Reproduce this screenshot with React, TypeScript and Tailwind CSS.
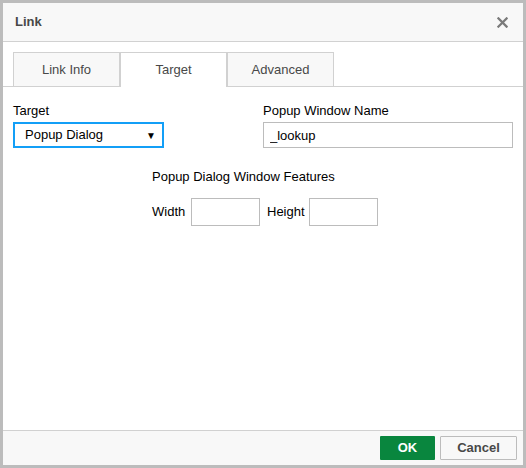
import { useState } from 'react'

const tabs = ['Link Info', 'Target', 'Advanced']

export default function App() {
  const [active, setActive] = useState('Target')
  const [name, setName] = useState('_lookup')

  return (
    <div className="flex h-[468px] w-[526px] flex-col border-[3px] border-[#bcbcbc] bg-white font-['Liberation_Sans',Arial,sans-serif] text-[13px] text-[#484848]">
      <div className="flex h-[39px] shrink-0 items-center justify-between border-b border-[#d1d1d1] bg-[#f8f8f8] pl-[12px] pr-[14px]">
        <span className="font-bold text-[#484848]">Link</span>
        <button type="button" className="flex size-[14px] items-center justify-center text-[#7a7a7a]">
          <svg viewBox="0 0 12 12" className="size-[11px]" fill="none" stroke="currentColor" strokeWidth="2.4" strokeLinecap="square">
            <path d="M1.5 1.5l9 9M10.5 1.5l-9 9" />
          </svg>
        </button>
      </div>

      <div className="flex h-[45px] shrink-0 items-end border-b border-[#d1d1d1] px-[10px]">
        {tabs.map(t => (
          <button
            key={t}
            type="button"
            onClick={() => setActive(t)}
            className={
              t === active
                ? '-mb-px flex h-[35px] w-[107px] items-center justify-center border border-b-0 border-[#d1d1d1] bg-white pb-[1px] text-[#484848]'
                : 'flex h-[34px] w-[107px] items-center justify-center border border-b-0 border-[#d1d1d1] bg-[#f8f8f8] text-[#484848]'
            }
          >
            {t}
          </button>
        ))}
      </div>

      <div className="flex-1 px-[10px] pt-[16px]">
        <div className="grid grid-cols-2">
          <div>
            <label className="block h-[16px] leading-[16px] text-[#000]">Target</label>
            <div className="mt-[3px] flex h-[26px] w-[151px] items-center justify-between border-2 border-[#139ff7] pl-[10px] pr-[6px] text-[#000]">
              <span>Popup Dialog</span>
              <span className="text-[10px]">▼</span>
            </div>
          </div>
          <div>
            <label className="block h-[16px] leading-[16px] text-[#000]">Popup Window Name</label>
            <input
              value={name}
              onChange={e => setName(e.target.value)}
              className="mt-[3px] h-[26px] w-[250px] border border-[#bcbcbc] px-[6px] text-[#000] outline-none"
            />
          </div>
        </div>

        <div className="ml-[139px] mt-[21px]">
          <p className="h-[16px] leading-[16px] text-[#000]">Popup Dialog Window Features</p>
          <div className="mt-[13px] flex items-center">
            <span className="w-[39px] shrink-0 whitespace-nowrap text-[#000]">Width</span>
            <input className="h-[28px] w-[69px] border border-[#bcbcbc] px-[6px] outline-none" />
            <span className="ml-[7px] w-[42px] shrink-0 whitespace-nowrap text-[#000]">Height</span>
            <input className="h-[28px] w-[69px] border border-[#bcbcbc] px-[6px] outline-none" />
          </div>
        </div>
      </div>

      <div className="flex h-[35px] shrink-0 items-center justify-end gap-[5px] border-t border-[#d1d1d1] bg-[#f8f8f8] pr-[6px]">
        <button type="button" className="h-[24px] w-[55px] rounded-[1px] bg-[#09863e] font-bold text-white">
          OK
        </button>
        <button type="button" className="h-[24px] w-[77px] rounded-[1px] border border-[#bcbcbc] bg-[#f8f8f8] font-bold text-[#484848]">
          Cancel
        </button>
      </div>
    </div>
  )
}
